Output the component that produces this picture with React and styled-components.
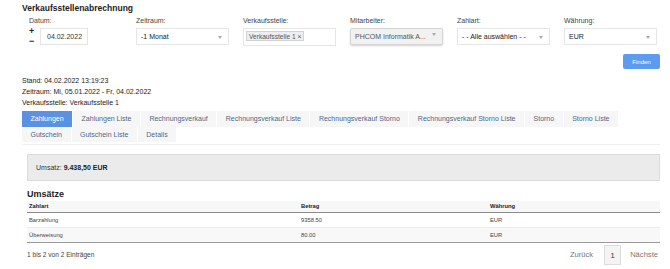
import React from 'react';
import styled, { createGlobalStyle } from 'styled-components';

const GlobalStyle = createGlobalStyle`
  html, body {
    margin: 0;
    padding: 0;
    background: #fff;
  }
  body {
    font-family: 'Liberation Sans', Arial, sans-serif;
    color: #333;
  }
  *, *:before, *:after {
    box-sizing: border-box;
  }
`;

const Page = styled.main`
  width: 670px;
  padding: 3px 10px 0 22px;
`;

const Title = styled.h1`
  margin: 0;
  font-size: 8.5px;
  line-height: 10px;
  font-weight: bold;
  color: #222;
`;

const Filters = styled.section`
  display: grid;
  grid-template-columns: repeat(6, 107px);
  margin: 3px 0 0 7px;
`;

const Field = styled.div`
  display: flex;
  flex-direction: column;
`;

const Label = styled.label`
  font-size: 7px;
  line-height: 10px;
  height: 12px;
  color: #444;
`;

const DateRow = styled.div`
  display: flex;
  align-items: flex-start;
`;

const Steppers = styled.div`
  display: flex;
  flex-direction: column;
  width: 11px;
  margin-top: -2px;
  font-size: 9px;
  line-height: 10px;
  font-weight: bold;
  color: #222;
`;

const Input = styled.div`
  width: 48px;
  height: 17px;
  border: 1px solid #e4e4e4;
  font-size: 7px;
  line-height: 15px;
  padding-left: 6px;
  color: #333;
`;

const Select = styled.div`
  position: relative;
  width: 93px;
  height: ${({ $tall }) => ($tall ? '18px' : '17px')};
  border: 1px solid ${({ $raised }) => ($raised ? '#d6d6d6' : '#e6e6e6')};
  background: ${({ $raised }) => ($raised ? '#f1f1f1' : '#fff')};
  box-shadow: ${({ $raised }) => ($raised ? '0 1px 2px rgba(0,0,0,0.18)' : 'none')};
  border-radius: ${({ $raised }) => ($raised ? '2px' : '0')};
  font-size: 7px;
  line-height: 15px;
  padding-left: ${({ $tall }) => ($tall ? '2px' : '4px')};
  color: ${({ $raised }) => ($raised ? '#555' : '#222')};
  white-space: nowrap;
  overflow: hidden;
`;

const Caret = styled.svg`
  position: absolute;
  right: 6px;
  top: ${({ $top }) => $top || 7}px;
`;

const Tag = styled.span`
  display: inline-block;
  margin-top: 2px;
  padding: 0 2px;
  height: 10px;
  line-height: 9px;
  font-size: 6.6px;
  color: #555;
  background: #eee;
  border: 1px solid #d2d2d2;
  vertical-align: top;
`;

const Actions = styled.div`
  display: flex;
  justify-content: flex-end;
  margin-top: 8px;
`;

const Button = styled.button`
  width: 37px;
  height: 15px;
  padding: 0;
  border: none;
  border-radius: 2px;
  background: #5d9bef;
  color: #fff;
  font-family: inherit;
  font-size: 6px;
`;

const Info = styled.div`
  margin-top: 6px;
  font-size: 7px;
  line-height: 11px;
  color: #222;
`;

const Tabs = styled.nav`
  display: flex;
  flex-wrap: wrap;
  margin-top: 3px;
  width: 600px;
`;

const Tab = styled.div`
  height: ${({ $row2 }) => ($row2 ? '15px' : '16px')};
  padding: 0 8.5px;
  font-size: 7px;
  line-height: ${({ $row2 }) => ($row2 ? '15px' : '16px')};
  white-space: nowrap;
  background: ${({ $active }) => ($active ? '#5b91e3' : '#f6f6f6')};
  color: ${({ $active }) => ($active ? '#fff' : '#50678c')};
  border-right: 1px solid #fff;
`;

const Break = styled.div`
  flex-basis: 100%;
  height: 0;
`;

const Panel = styled.section`
  margin-top: 2px;
  border-top: 1px solid #f0f0f0;
  padding: 9px 0 0 5px;
`;

const Summary = styled.div`
  height: 27px;
  background: #ebebeb;
  border: 1px solid #dcdcdc;
  padding-left: 8px;
  font-size: 7px;
  line-height: 25px;
  color: #333;
  b {
    color: #222;
  }
`;

const Heading = styled.h2`
  margin: 7px 0 0;
  font-size: 9px;
  line-height: 12px;
  font-weight: bold;
  color: #222;
`;

const Table = styled.table`
  width: 100%;
  border-collapse: collapse;
  margin-top: 1px;
  font-size: 5.8px;
  color: #444;
  th, td {
    text-align: left;
    padding: 0 2px;
  }
  th {
    height: 11px;
    font-weight: bold;
    color: #222;
    background: #f7f7f7;
    border-bottom: 1px solid #8c8c8c;
  }
  td {
    height: 15px;
    border-bottom: 1px solid #ededed;
  }
  tbody tr:nth-child(2) td {
    background: #f8f8f8;
  }
  tbody tr:last-child td {
    border-bottom: 1px solid #9a9a9a;
  }
`;

const Footer = styled.footer`
  display: flex;
  align-items: center;
  justify-content: space-between;
  margin-top: 2px;
  padding-right: 2px;
`;

const Count = styled.span`
  font-size: 6.6px;
  color: #444;
`;

const Pager = styled.div`
  display: flex;
  align-items: center;
  font-size: 7.6px;
  color: #777;
`;

const PageLink = styled.span`
  padding: 0 0 0 6px;
`;

const PageNum = styled.span`
  width: 17px;
  height: 20px;
  line-height: 20px;
  text-align: center;
  border: 1px solid #ddd;
  background: #f4f4f4;
  color: #333;
  margin: 0 3px 0 11px;
`;

const CaretIcon = ({ top }) => (
  <Caret $top={top} width="4" height="3" viewBox="0 0 4 3">
    <path d="M0 0 L4 0 L2 3 Z" fill="#aaa" />
  </Caret>
);

const tabsRow1 = [
  'Zahlungen',
  'Zahlungen Liste',
  'Rechnungsverkauf',
  'Rechnungsverkauf Liste',
  'Rechnungsverkauf Storno',
  'Rechnungsverkauf Storno Liste',
  'Storno',
  'Storno Liste',
];
const tabsRow2 = ['Gutschein', 'Gutschein Liste', 'Details'];

const rows = [
  { art: 'Barzahlung', betrag: '9358.50', waehrung: 'EUR' },
  { art: 'Überweisung', betrag: '80.00', waehrung: 'EUR' },
];

export default function App() {
  return (
    <>
      <GlobalStyle />
      <Page>
        <Title>Verkaufsstellenabrechnung</Title>
        <Filters>
          <Field>
            <Label>Datum:</Label>
            <DateRow>
              <Steppers>
                <span>+</span>
                <span>−</span>
              </Steppers>
              <Input>04.02.2022</Input>
            </DateRow>
          </Field>
          <Field>
            <Label>Zeitraum:</Label>
            <Select>
              -1 Monat
              <CaretIcon />
            </Select>
          </Field>
          <Field>
            <Label>Verkaufsstelle:</Label>
            <Select $tall>
              <Tag>Verkaufsstelle 1 ×</Tag>
            </Select>
          </Field>
          <Field>
            <Label>Mitarbeiter:</Label>
            <Select $raised>
              PHCOM Informatik A...
              <CaretIcon top={4} />
            </Select>
          </Field>
          <Field>
            <Label>Zahlart:</Label>
            <Select>
              - - Alle auswählen - -
              <CaretIcon />
            </Select>
          </Field>
          <Field>
            <Label>Währung:</Label>
            <Select>
              EUR
              <CaretIcon />
            </Select>
          </Field>
        </Filters>
        <Actions>
          <Button>Finden</Button>
        </Actions>
        <Info>
          <div>Stand: 04.02.2022 13:19:23</div>
          <div>Zeitraum: Mi, 05.01.2022 - Fr, 04.02.2022</div>
          <div>Verkaufsstelle: Verkaufsstelle 1</div>
        </Info>
        <Tabs>
          {tabsRow1.map((t, i) => (
            <Tab key={t} $active={i === 0}>{t}</Tab>
          ))}
          <Break />
          {tabsRow2.map((t) => (
            <Tab key={t} $row2>{t}</Tab>
          ))}
        </Tabs>
        <Panel>
          <Summary>
            Umsatz: <b>9.438,50 EUR</b>
          </Summary>
          <Heading>Umsätze</Heading>
          <Table>
            <colgroup>
              <col style={{ width: '272px' }} />
              <col style={{ width: '189px' }} />
              <col />
            </colgroup>
            <thead>
              <tr>
                <th>Zahlart</th>
                <th>Betrag</th>
                <th>Währung</th>
              </tr>
            </thead>
            <tbody>
              {rows.map((r) => (
                <tr key={r.art}>
                  <td>{r.art}</td>
                  <td>{r.betrag}</td>
                  <td>{r.waehrung}</td>
                </tr>
              ))}
            </tbody>
          </Table>
          <Footer>
            <Count>1 bis 2 von 2 Einträgen</Count>
            <Pager>
              <PageLink>Zurück</PageLink>
              <PageNum>1</PageNum>
              <PageLink>Nächste</PageLink>
            </Pager>
          </Footer>
        </Panel>
      </Page>
    </>
  );
}
